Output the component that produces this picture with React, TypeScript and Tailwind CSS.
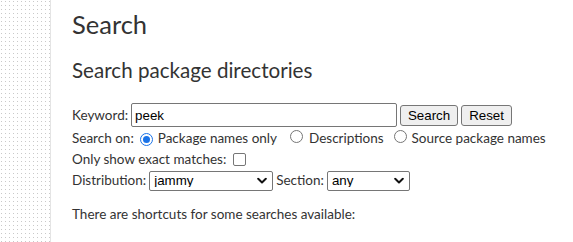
import React from "react";

function Chevron() {
  return (
    <svg width="10" height="7" viewBox="0 0 10 7" className="pointer-events-none absolute right-[6px] top-1/2 -translate-y-1/2">
      <path d="M1.2 1.3 L5 5 L8.8 1.3" fill="none" stroke="#111" strokeWidth="2" strokeLinecap="round" strokeLinejoin="round" />
    </svg>
  );
}

function Select({ value, width }: { value: string; width: string }) {
  return (
    <span className={`relative inline-flex h-[20px] ${width}`}>
      <select
        defaultValue={value}
        className="h-full w-full appearance-none rounded-[2px] border border-[#767676] bg-white pl-[4px] text-[13.33px] leading-none text-black outline-none"
        style={{ fontFamily: '"Liberation Sans", Arial, sans-serif' }}
      >
        <option value={value}>{value}</option>
      </select>
      <Chevron />
    </span>
  );
}

function Radio({ checked }: { checked?: boolean }) {
  return (
    <span
      className={`inline-flex h-[13px] w-[13px] shrink-0 items-center justify-center rounded-full border ${
        checked ? "border-[#1a73e8] border-[1.5px]" : "border-[#767676]"
      } bg-white`}
    >
      {checked && <span className="h-[7px] w-[7px] rounded-full bg-[#1a73e8]" />}
    </span>
  );
}

export default function App() {
  return (
    <div
      className="flex min-h-screen bg-white text-[13.5px] text-[#333]"
      style={{ fontFamily: 'Lato, "Noto Sans", sans-serif' }}
    >
      <div className="relative w-[51px] shrink-0 border-r border-[#e4e4e4]">
        <svg className="absolute inset-0 h-full w-full" aria-hidden>
          <defs>
            <pattern id="dots" x="0" y="0" width="4" height="4" patternUnits="userSpaceOnUse">
              <rect x="1" y="1" width="1" height="1" fill="#c9c9c9" />
            </pattern>
          </defs>
          <rect width="100%" height="100%" fill="url(#dots)" />
        </svg>
      </div>
      <main className="flex-1 pl-[21px] pt-[8px]">
        <h1 className="text-[25.5px] leading-[32px] font-normal">Search</h1>
        <h2 className="mt-[17px] text-[20.6px] leading-[26px] font-normal">Search package directories</h2>

        <form className="mt-[20px] flex flex-col">
          <div className="flex h-[24px] items-center">
            <label className="mr-[3px]">Keyword:</label>
            <input
              defaultValue="peek"
              className="h-[24px] w-[266px] rounded-[2px] border border-[#767676] px-[3px] text-[13.33px] text-black outline-none"
              style={{ fontFamily: '"Liberation Sans", Arial, sans-serif' }}
            />
            <button
              type="button"
              className="ml-[3px] h-[21px] w-[58px] rounded-[3px] border border-[#767676] bg-[#efefef] text-[13.33px] text-black"
              style={{ fontFamily: '"Liberation Sans", Arial, sans-serif' }}
            >
              Search
            </button>
            <button
              type="button"
              className="ml-[3px] h-[21px] w-[51px] rounded-[3px] border border-[#767676] bg-[#efefef] text-[13.33px] text-black"
              style={{ fontFamily: '"Liberation Sans", Arial, sans-serif' }}
            >
              Reset
            </button>
          </div>
          <div className="mt-[1px] flex h-[21px] items-center">
            <span>Search on:</span>
            <span className="ml-[6px] mr-[5px]"><Radio checked /></span>
            <span>Package names only</span>
            <span className="ml-[13px] mr-[6px]"><Radio /></span>
            <span>Descriptions</span>
            <span className="ml-[10px] mr-[5px]"><Radio /></span>
            <span>Source package names</span>
          </div>
          <div className="flex h-[21px] items-center">
            <span>Only show exact matches:</span>
            <span className="ml-[7px] inline-block h-[13px] w-[13px] rounded-[2px] border border-[#767676] bg-white" />
          </div>
          <div className="flex h-[21px] items-center">
            <span className="mr-[3px]">Distribution:</span>
            <Select value="jammy" width="w-[124px]" />
            <span className="ml-[3px] mr-[3px]">Section:</span>
            <Select value="any" width="w-[83px]" />
          </div>
        </form>

        <p className="mt-[13px] leading-[20px]">There are shortcuts for some searches available:</p>
        <ul className="mt-[16px] pl-[40px] leading-[20px]">
          <li>packages.ubuntu.com/<i>name</i> for the search on package names.</li>
        </ul>
      </main>
    </div>
  );
}
